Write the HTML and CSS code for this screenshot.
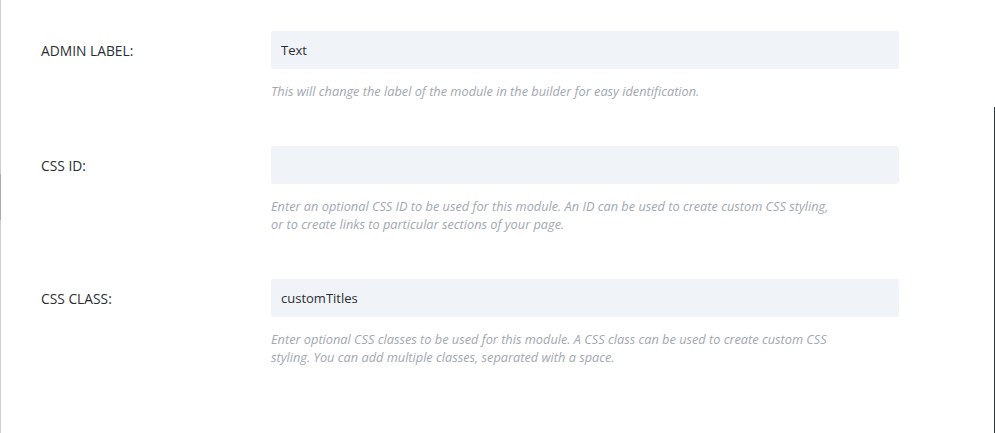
FILE: index.html
```html
<!DOCTYPE html>
<html lang="en">
<head>
  <meta charset="UTF-8" />
  <title>Module Settings</title>
  <link rel="stylesheet" href="styles.css">
</head>
<body>
  <div class="panel">
    <div class="scroll-thumb"></div>

    <div class="field">
      <label class="field-label" for="admin-label">Admin Label:</label>
      <div class="field-body">
        <input class="field-input" id="admin-label" type="text" value="Text">
        <p class="field-help">This will change the label of the module in the builder for easy identification.</p>
      </div>
    </div>

    <div class="field">
      <label class="field-label" for="css-id">CSS ID:</label>
      <div class="field-body">
        <input class="field-input" id="css-id" type="text" value="">
        <p class="field-help">Enter an optional CSS ID to be used for this module. An ID can be used to create custom CSS styling, or to create links to particular sections of your page.</p>
      </div>
    </div>

    <div class="field">
      <label class="field-label" for="css-class">CSS Class:</label>
      <div class="field-body">
        <input class="field-input" id="css-class" type="text" value="customTitles">
        <p class="field-help">Enter optional CSS classes to be used for this module. A CSS class can be used to create custom CSS styling. You can add multiple classes, separated with a space.</p>
      </div>
    </div>

    <div class="edge-line"></div>
  </div>
</body>
</html>
```

FILE: styles.css
```css
* {
  margin: 0;
  padding: 0;
  box-sizing: border-box;
}

body, html {
  height: 100%;
  background: #fff;
  font-family: 'Open Sans', 'Segoe UI', sans-serif;
  overflow: hidden;
}

.panel {
  position: relative;
  height: 100%;
  padding: 31px 0 0 40px;
  border-left: 1px solid #cfcfcf;
  display: flex;
  flex-direction: column;
  gap: 46px;
}

/* darker bit of the left scrollbar */
.scroll-thumb {
  position: absolute;
  left: -1px;
  top: 174px;
  width: 1px;
  height: 46px;
  background: #a9a9a9;
}

/* dark divider on the right */
.edge-line {
  position: absolute;
  right: 0;
  top: 107px;
  bottom: 0;
  width: 1px;
  background: #32373c;
}

.field {
  display: flex;
  align-items: flex-start;
}

.field-label {
  width: 230px;
  height: 38px;
  display: flex;
  align-items: center;
  font-size: 13.8px;
  color: #2b2f33;
  text-transform: uppercase;
}

.field-body {
  width: 628px;
}

.field-input {
  display: block;
  width: 100%;
  height: 38px;
  padding: 0 10px;
  border: none;
  border-radius: 3px;
  background: #f0f3f7;
  font-family: inherit;
  font-size: 13px;
  color: #2b2f33;
  outline: none;
}

.field-help {
  margin-top: 13px;
  max-width: 565px;
  font-size: 12.75px;
  line-height: 18px;
  font-style: italic;
  color: #a2a8b1;
}
```
